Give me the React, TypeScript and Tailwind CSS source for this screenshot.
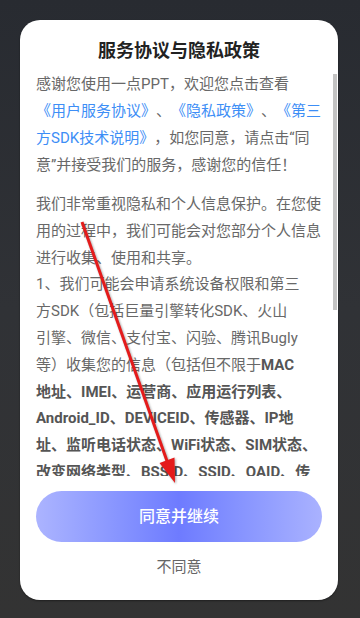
const font = { fontFamily: 'Roboto, "Noto Sans CJK SC", sans-serif' };

function Link({ children }: { children: React.ReactNode }) {
  return <span className="text-[#3d8ef6]">{children}</span>;
}

function B({ children }: { children: React.ReactNode }) {
  return <span className="font-bold text-[#555]">{children}</span>;
}

export default function App() {
  return (
    <div
      className="relative min-h-screen w-full overflow-hidden bg-linear-to-b from-[#282b31] via-[#303236] to-[#333333] pt-[20px] [text-spacing-trim:space-all]"
      style={font}
    >
      <div className="ml-[20px] flex h-[580px] w-[318px] flex-col rounded-[20px] bg-white shadow-[0_1px_2px_rgba(0,0,0,0.4)]">
        <h1 className="pt-[18px] text-center text-[18px] leading-[26px] font-bold text-[#222]">
          服务协议与隐私政策
        </h1>

        <div className="relative mt-[7px] h-[405px] overflow-hidden px-4 text-[15px] whitespace-nowrap text-[#686868]">
          <div className="leading-[27px]">
            <div>感谢您使用一点PPT，欢迎您点击查看</div>
            <div>
              <Link>《用户服务协议》</Link>、<Link>《隐私政策》</Link>、<Link>《第三</Link>
            </div>
            <div>
              <Link>方SDK技术说明》</Link>，如您同意，请点击“同
            </div>
            <div>意”并接受我们的服务，感谢您的信任！</div>
          </div>

          <div className="mt-[12px] leading-[26.8px]">
            <div>我们非常重视隐私和个人信息保护。在您使</div>
            <div>用的过程中，我们可能会对您部分个人信息</div>
            <div>进行收集、使用和共享。</div>
            <div>1、我们可能会申请系统设备权限和第三</div>
            <div>方SDK（包括巨量引擎转化SDK、火山</div>
            <div>引擎、微信、支付宝、闪验、腾讯Bugly</div>
            <div>
              等）收集您的信息（包括但不限于<B>MAC</B>
            </div>
            <div>
              <B>地址、IMEI、运营商、应用运行列表、</B>
            </div>
            <div>
              <B>Android_ID、DEVICEID、传感器、IP地</B>
            </div>
            <div>
              <B>址、监听电话状态、WiFi状态、SIM状态、</B>
            </div>
            <div>
              <B>改变网络类型、BSSID、SSID、OAID、传</B>
            </div>
          </div>

          {/* scroll thumb */}
          <div className="absolute top-[3px] right-[1px] h-[236px] w-[4px] bg-[#c3c3c3]" />
        </div>

        <button className="mx-4 mt-[15px] h-[51px] rounded-full bg-linear-to-r from-[#acb4ff] via-[#6e7bff] to-[#aab2ff] text-[16px] font-medium text-white">
          同意并继续
        </button>
        <div className="mt-[13px] text-center text-[15px] leading-[24px] text-[#666]">不同意</div>
      </div>

      {/* red annotation arrow */}
      <svg
        className="pointer-events-none absolute top-0 left-0 drop-shadow-[1px_1px_1px_rgba(0,0,0,0.35)]"
        width="360"
        height="618"
        viewBox="0 0 360 618"
      >
        <line x1="82" y1="222" x2="167" y2="461" stroke="#e41b1b" strokeWidth="3" />
        <polygon points="175,483 174.5,457.5 159.5,463" fill="#e41b1b" />
      </svg>
    </div>
  );
}
